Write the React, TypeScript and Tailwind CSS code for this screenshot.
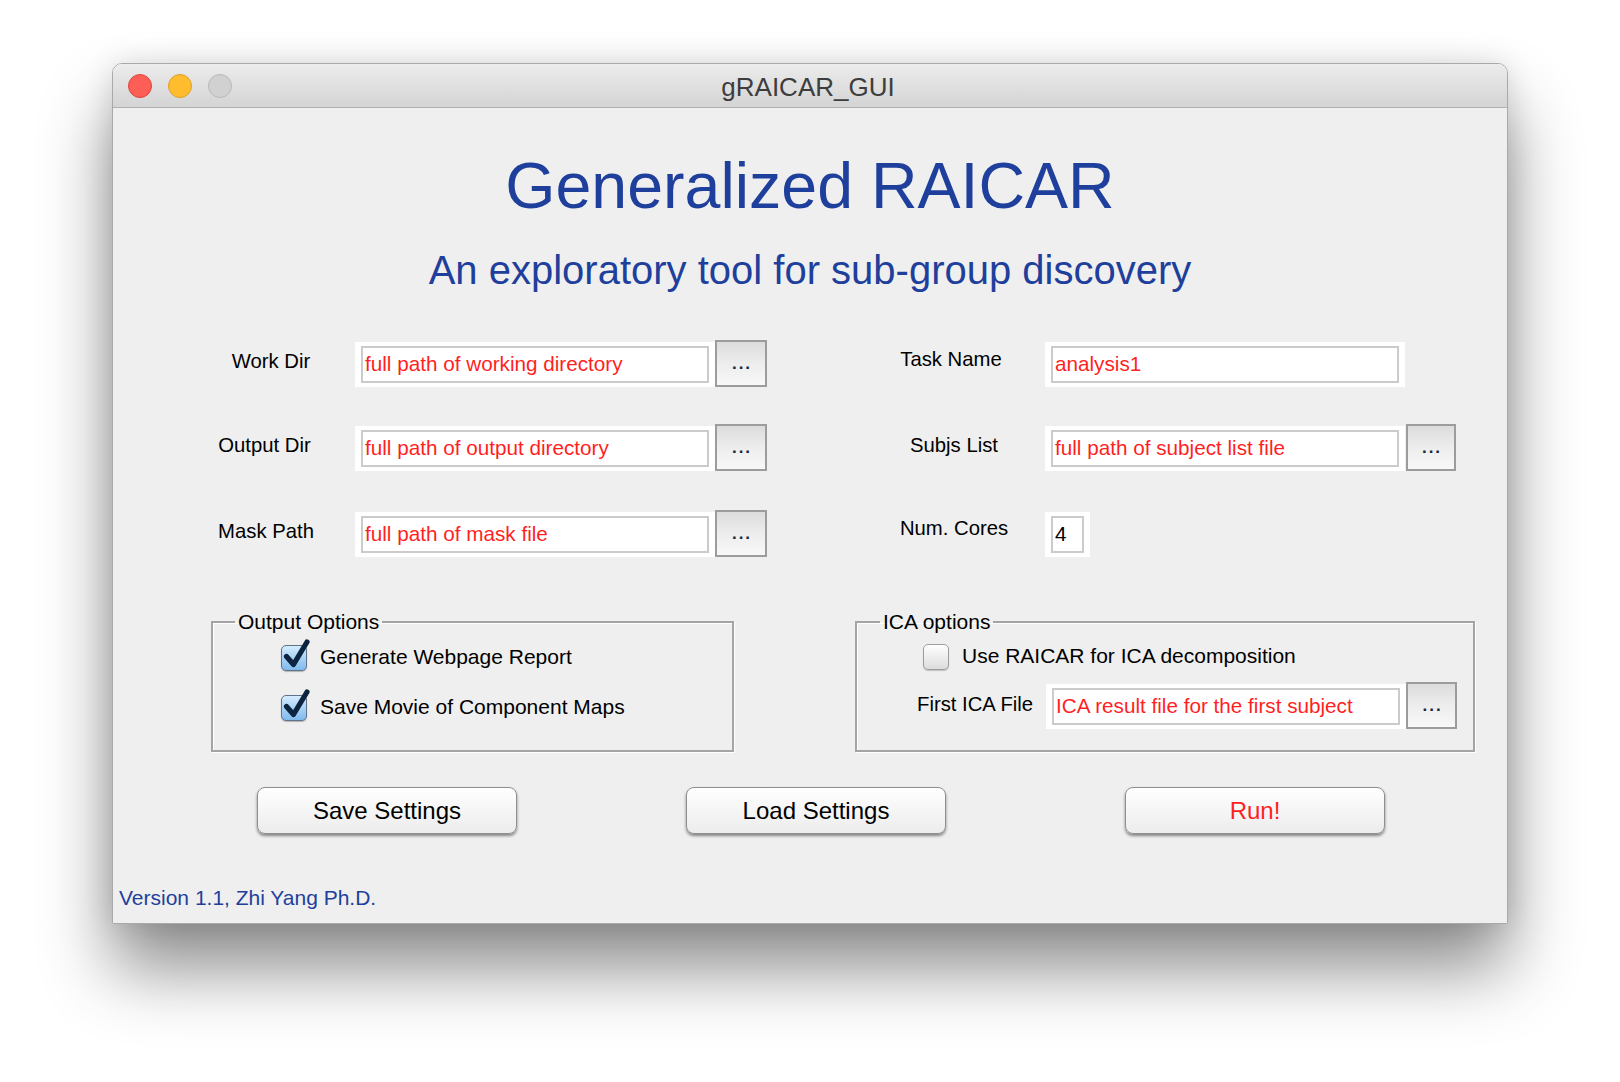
import React from "react";

const FONT = { fontFamily: '"Liberation Sans", Arial, Helvetica, sans-serif' };

/* ===== SMALL PIECES ===== */
function TextBox({ value, width, red = true }: { value: string; width: string; red?: boolean }) {
  return (
    <div className={`${width} h-[45px] shrink-0 self-end bg-white px-[6px] py-[4px]`}>
      <div className="flex h-full items-center border-2 border-[#cbcbcb] bg-white pl-[2px]">
        <span className={`whitespace-nowrap text-[20.7px] leading-none ${red ? "text-[#ff1f1f]" : "text-black"}`}>{value}</span>
      </div>
    </div>
  );
}

function DotsButton({ width = "w-[52px]" }: { width?: string }) {
  return (
    <button
      className={`${width} flex h-[47px] shrink-0 items-center justify-center self-end border-2 border-[#9c9c9c] bg-gradient-to-b from-[#dcdcdc] via-[#ededed] to-[#f8f8f8]`}
    >
      <span className="pl-[2px] text-[17px] font-bold leading-none tracking-[2px] text-[#17263c]">...</span>
    </button>
  );
}

function Label({ text, cls = "" }: { text: string; cls?: string }) {
  return (
    <div className={`w-[130px] shrink-0 self-center pb-[4px] text-center text-[20.3px] leading-none text-black ${cls}`}>{text}</div>
  );
}

function CheckBox({ checked }: { checked: boolean }) {
  if (!checked) {
    return (
      <div className="h-[26px] w-[26px] shrink-0 rounded-[5px] border border-[#9d9d9d] bg-gradient-to-b from-[#ffffff] to-[#dcdcdc] shadow-[0_1px_1px_rgba(0,0,0,0.2)]" />
    );
  }
  return (
    <div className="relative h-[26px] w-[26px] shrink-0 rounded-[5px] border border-[#5f7288] bg-gradient-to-b from-[#d6ecfd] via-[#a9d3f6] to-[#7fb9ec] shadow-[0_1px_1px_rgba(0,0,0,0.25)]">
      <svg className="absolute left-0 top-0 overflow-visible" width="26" height="26" viewBox="0 0 26 26">
        <path d="M4.5 10.5 L11.5 18.5 L25 -4" fill="none" stroke="#0d2440" strokeWidth="5.2" strokeLinecap="round" strokeLinejoin="round" />
      </svg>
    </div>
  );
}

function BigButton({ text, red = false }: { text: string; red?: boolean }) {
  return (
    <button className="flex h-[47px] w-[260px] shrink-0 items-center justify-center rounded-[8px] border border-[#8f8f8f] bg-gradient-to-b from-[#ffffff] to-[#ececec] shadow-[0_2px_3px_rgba(0,0,0,0.45)]">
      <span className={`text-[24px] leading-none ${red ? "text-[#ff1f1f]" : "text-black"}`}>{text}</span>
    </button>
  );
}

export default function App() {
  return (
    <div className="h-[1082px] w-full overflow-hidden bg-white pt-[63px]" style={FONT}>
      {/* Window */}
      <div className="mx-auto w-[1396px] overflow-hidden rounded-t-[10px] border border-[#a9a9a9] shadow-[0_45px_70px_rgba(0,0,0,0.45),0_0_28px_rgba(0,0,0,0.12)]">
        {/* Title bar */}
        <div className="relative flex h-[44px] items-center justify-center border-b border-[#b0b0b0] bg-gradient-to-b from-[#ececec] to-[#d4d4d4]">
          <div className="absolute left-[15px] top-[10px] flex gap-[16px]">
            <span className="h-[24px] w-[24px] rounded-full border border-[#e0443e] bg-[#fd5f57]" />
            <span className="h-[24px] w-[24px] rounded-full border border-[#dea123] bg-[#febc2e]" />
            <span className="h-[24px] w-[24px] rounded-full border border-[#b8b8b8] bg-[#d1d1d1]" />
          </div>
          <span className="pr-[4px] pt-[2px] text-[26px] leading-none text-[#3d3d3d]">gRAICAR_GUI</span>
        </div>

        {/* Body */}
        <div className="flex h-[815px] flex-col bg-[#efefef]">
          <h1 className="pt-[40px] text-center text-[64.5px] leading-[76px] text-[#1f3f9c]">Generalized RAICAR</h1>
          <h2 className="mt-[22px] text-center text-[40px] leading-[48px] text-[#1f3f9c]">An exploratory tool for sub-group discovery</h2>

          {/* Row 1 */}
          <div className="mt-[46px] flex h-[47px] pl-[88px]">
            <Label text="Work Dir" cls="pl-[10px]" />
            <div className="ml-[24px] flex">
              <TextBox value="full path of working directory" width="w-[360px]" />
              <DotsButton />
            </div>
            <div className="ml-[119px] flex">
              <Label text="Task Name" cls="pb-[9px]" />
              <div className="ml-[29px] flex">
                <TextBox value="analysis1" width="w-[360px]" />
              </div>
            </div>
          </div>

          {/* Row 2 */}
          <div className="mt-[36px] flex h-[48px] pl-[88px]">
            <Label text="Output Dir" cls="pr-[3px]" />
            <div className="ml-[24px] flex">
              <TextBox value="full path of output directory" width="w-[360px]" />
              <DotsButton />
            </div>
            <div className="ml-[119px] flex">
              <Label text="Subjs List" cls="pl-[6px]" />
              <div className="ml-[29px] flex">
                <TextBox value="full path of subject list file" width="w-[360px]" />
                <DotsButton width="w-[50px] ml-[1px]" />
              </div>
            </div>
          </div>

          {/* Row 3 */}
          <div className="mt-[38px] flex h-[48px] pl-[88px]">
            <Label text="Mask Path" />
            <div className="ml-[24px] flex">
              <TextBox value="full path of mask file" width="w-[360px]" />
              <DotsButton />
            </div>
            <div className="ml-[119px] flex">
              <Label text="Num. Cores" cls="pb-[9px] pl-[6px]" />
              <div className="ml-[29px] flex">
                <TextBox value="4" width="w-[45px]" red={false} />
              </div>
            </div>
          </div>

          {/* Groups */}
          <div className="mt-[53px] flex">
            <fieldset className="ml-[98px] h-[142px] w-[523px] border-2 border-[#a4a4a4] shadow-[inset_1px_1px_0_#ffffff,1px_1px_0_#ffffff]">
              <legend className="ml-[22px] px-[3px] text-[21px] leading-[24px] text-black">Output Options</legend>
              <div className="flex flex-col gap-[24px] pl-[68px] pt-[11px]">
                <div className="flex items-center gap-[13px]">
                  <CheckBox checked />
                  <span className="pb-[4px] text-[21px] leading-none text-black">Generate Webpage Report</span>
                </div>
                <div className="flex items-center gap-[13px]">
                  <CheckBox checked />
                  <span className="pb-[4px] text-[21px] leading-none text-black">Save Movie of Component Maps</span>
                </div>
              </div>
            </fieldset>

            <fieldset className="ml-[121px] h-[142px] w-[620px] border-2 border-[#a4a4a4] shadow-[inset_1px_1px_0_#ffffff,1px_1px_0_#ffffff]">
              <legend className="ml-[23px] px-[3px] text-[21px] leading-[24px] text-black">ICA options</legend>
              <div className="flex flex-col pt-[10px]">
                <div className="flex items-center gap-[13px] pl-[66px]">
                  <CheckBox checked={false} />
                  <span className="pb-[4px] text-[21px] leading-none text-black">Use RAICAR for ICA decomposition</span>
                </div>
                <div className="mt-[12px] flex h-[47px] pl-[60px]">
                  <span className="self-center whitespace-nowrap pb-[2px] text-[20.3px] leading-none text-black">First ICA File</span>
                  <div className="ml-[13px] flex">
                    <TextBox value="ICA result file for the first subject" width="w-[360px]" />
                    <DotsButton width="w-[51px]" />
                  </div>
                </div>
              </div>
            </fieldset>
          </div>

          {/* Buttons */}
          <div className="mt-[35px] flex">
            <div className="ml-[144px]">
              <BigButton text="Save Settings" />
            </div>
            <div className="ml-[169px]">
              <BigButton text="Load Settings" />
            </div>
            <div className="ml-[179px]">
              <BigButton text="Run!" red />
            </div>
          </div>

          <div className="mt-[52px] pl-[6px] text-[21px] leading-[24px] text-[#1f3f9c]">Version 1.1, Zhi Yang Ph.D.</div>
        </div>
      </div>
    </div>
  );
}
